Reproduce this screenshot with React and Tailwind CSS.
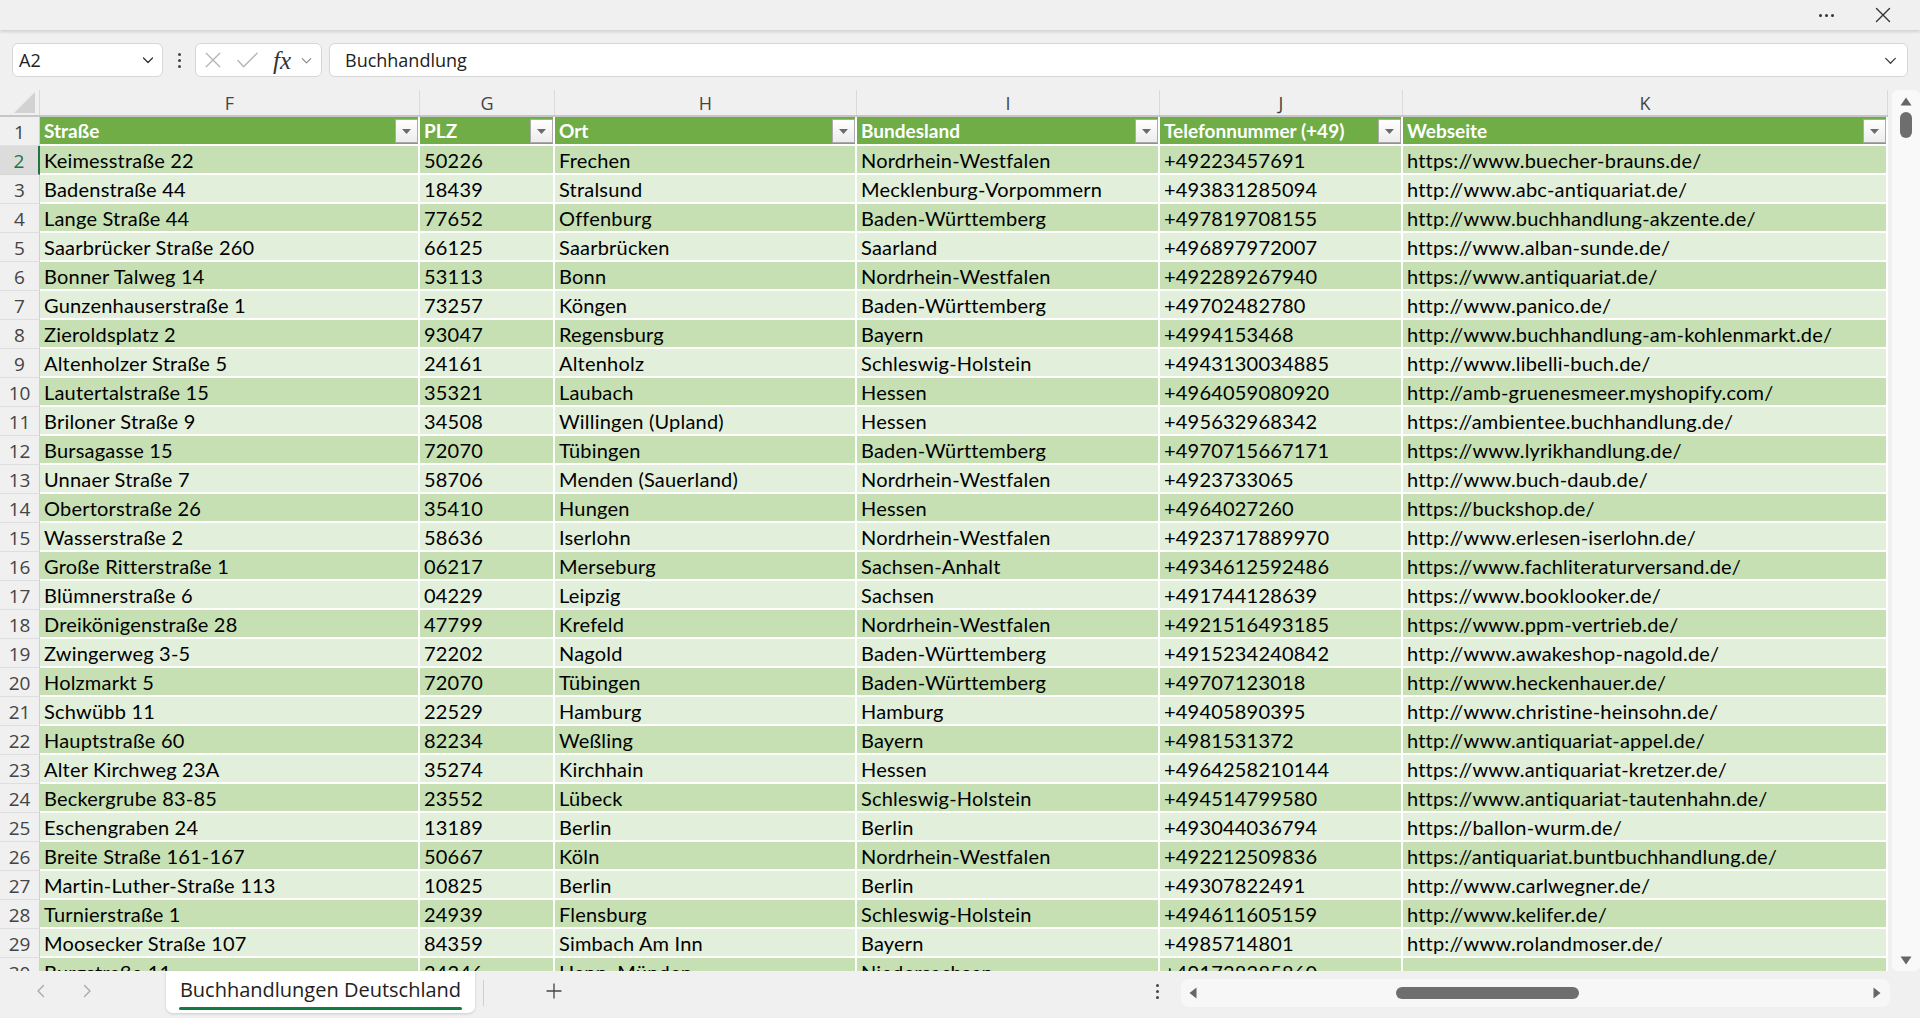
import React from "react";

const UI = { fontFamily: '"Open Sans", "Noto Sans", sans-serif' };
const CELL = { fontFamily: 'Lato, "Liberation Sans", sans-serif' };

const headers = ["Straße", "PLZ", "Ort", "Bundesland", "Telefonnummer (+49)", "Webseite"];
const letters = ["F", "G", "H", "I", "J", "K"];
const widths = ["w-[380px]", "w-[135px]", "w-[302px]", "w-[303px]", "w-[243px]", "w-[485px]"];

const data = [
  ["Keimesstraße 22", "50226", "Frechen", "Nordrhein-Westfalen", "+49223457691", "https://www.buecher-brauns.de/"],
  ["Badenstraße 44", "18439", "Stralsund", "Mecklenburg-Vorpommern", "+493831285094", "http://www.abc-antiquariat.de/"],
  ["Lange Straße 44", "77652", "Offenburg", "Baden-Württemberg", "+497819708155", "http://www.buchhandlung-akzente.de/"],
  ["Saarbrücker Straße 260", "66125", "Saarbrücken", "Saarland", "+496897972007", "https://www.alban-sunde.de/"],
  ["Bonner Talweg 14", "53113", "Bonn", "Nordrhein-Westfalen", "+492289267940", "https://www.antiquariat.de/"],
  ["Gunzenhauserstraße 1", "73257", "Köngen", "Baden-Württemberg", "+49702482780", "http://www.panico.de/"],
  ["Zieroldsplatz 2", "93047", "Regensburg", "Bayern", "+4994153468", "http://www.buchhandlung-am-kohlenmarkt.de/"],
  ["Altenholzer Straße 5", "24161", "Altenholz", "Schleswig-Holstein", "+4943130034885", "http://www.libelli-buch.de/"],
  ["Lautertalstraße 15", "35321", "Laubach", "Hessen", "+4964059080920", "http://amb-gruenesmeer.myshopify.com/"],
  ["Briloner Straße 9", "34508", "Willingen (Upland)", "Hessen", "+495632968342", "https://ambientee.buchhandlung.de/"],
  ["Bursagasse 15", "72070", "Tübingen", "Baden-Württemberg", "+4970715667171", "https://www.lyrikhandlung.de/"],
  ["Unnaer Straße 7", "58706", "Menden (Sauerland)", "Nordrhein-Westfalen", "+4923733065", "http://www.buch-daub.de/"],
  ["Obertorstraße 26", "35410", "Hungen", "Hessen", "+4964027260", "https://buckshop.de/"],
  ["Wasserstraße 2", "58636", "Iserlohn", "Nordrhein-Westfalen", "+4923717889970", "http://www.erlesen-iserlohn.de/"],
  ["Große Ritterstraße 1", "06217", "Merseburg", "Sachsen-Anhalt", "+4934612592486", "https://www.fachliteraturversand.de/"],
  ["Blümnerstraße 6", "04229", "Leipzig", "Sachsen", "+491744128639", "https://www.booklooker.de/"],
  ["Dreikönigenstraße 28", "47799", "Krefeld", "Nordrhein-Westfalen", "+4921516493185", "https://www.ppm-vertrieb.de/"],
  ["Zwingerweg 3-5", "72202", "Nagold", "Baden-Württemberg", "+4915234240842", "http://www.awakeshop-nagold.de/"],
  ["Holzmarkt 5", "72070", "Tübingen", "Baden-Württemberg", "+49707123018", "http://www.heckenhauer.de/"],
  ["Schwübb 11", "22529", "Hamburg", "Hamburg", "+49405890395", "http://www.christine-heinsohn.de/"],
  ["Hauptstraße 60", "82234", "Weßling", "Bayern", "+4981531372", "http://www.antiquariat-appel.de/"],
  ["Alter Kirchweg 23A", "35274", "Kirchhain", "Hessen", "+4964258210144", "https://www.antiquariat-kretzer.de/"],
  ["Beckergrube 83-85", "23552", "Lübeck", "Schleswig-Holstein", "+494514799580", "https://www.antiquariat-tautenhahn.de/"],
  ["Eschengraben 24", "13189", "Berlin", "Berlin", "+493044036794", "https://ballon-wurm.de/"],
  ["Breite Straße 161-167", "50667", "Köln", "Nordrhein-Westfalen", "+492212509836", "https://antiquariat.buntbuchhandlung.de/"],
  ["Martin-Luther-Straße 113", "10825", "Berlin", "Berlin", "+49307822491", "http://www.carlwegner.de/"],
  ["Turnierstraße 1", "24939", "Flensburg", "Schleswig-Holstein", "+494611605159", "http://www.kelifer.de/"],
  ["Moosecker Straße 107", "84359", "Simbach Am Inn", "Bayern", "+4985714801", "http://www.rolandmoser.de/"],
  ["Burgstraße 11", "34346", "Hann. Münden", "Niedersachsen", "+491738285860", ""],
];

function Chevron({ className = "", size = 16, color = "#333" }) {
  return (
    <svg width={size} height={size} viewBox="0 0 16 16" className={className}>
      <path d="M3.5 6l4.5 4.5L12.5 6" fill="none" stroke={color} strokeWidth="1.3" strokeLinecap="round" strokeLinejoin="round" />
    </svg>
  );
}

function FilterBtn() {
  return (
    <div className="w-[23px] h-[24px] shrink-0 border border-[#ababab] bg-gradient-to-b from-white to-[#ececec] flex items-center justify-center">
      <svg width="9" height="5" viewBox="0 0 9 5">
        <path d="M0 0h9L4.5 5z" fill="#6b6b6b" />
      </svg>
    </div>
  );
}

export default function App() {
  return (
    <div className="w-[1920px] h-[1018px] bg-[#f0f0f0] flex flex-col overflow-hidden" style={UI}>
      {/* Title bar */}
      <div className="h-[30px] shrink-0 flex items-center justify-end bg-[#f0f0f0] relative z-10 shadow-[0_2px_3px_rgba(0,0,0,0.13)]">
        <div className="flex items-center gap-[3px] mr-[41px]">
          <span className="w-[3px] h-[3px] rounded-full bg-[#333]" />
          <span className="w-[3px] h-[3px] rounded-full bg-[#333]" />
          <span className="w-[3px] h-[3px] rounded-full bg-[#333]" />
        </div>
        <svg width="16" height="16" viewBox="0 0 16 16" className="mr-[29px]">
          <path d="M1.5 1.5l13 13M14.5 1.5l-13 13" stroke="#333" strokeWidth="1.4" strokeLinecap="round" />
        </svg>
      </div>

      {/* Formula bar */}
      <div className="h-[60px] shrink-0 flex items-center pl-[12px] pr-[12px]">
        <div className="w-[151px] h-[34px] bg-white border border-[#d6d6d6] rounded-[6px] flex items-center justify-between pl-[6px] pr-[6px]">
          <span className="text-[18px] text-[#222]">A2</span>
          <Chevron size={16} color="#333" />
        </div>
        <div className="w-[32px] flex flex-col items-center gap-[3px]">
          <span className="w-[3px] h-[3px] rounded-full bg-[#444]" />
          <span className="w-[3px] h-[3px] rounded-full bg-[#444]" />
          <span className="w-[3px] h-[3px] rounded-full bg-[#444]" />
        </div>
        <div className="w-[127px] h-[34px] bg-white border border-[#d6d6d6] rounded-[6px] flex items-center pl-[8px]">
          <svg width="18" height="18" viewBox="0 0 16 16">
            <path d="M2 2l12 12M14 2L2 14" stroke="#b4b4b4" strokeWidth="1.2" strokeLinecap="round" />
          </svg>
          <svg width="23" height="18" viewBox="0 0 20 16" className="ml-[14px]">
            <path d="M1.5 8.5l5 5.5L18.5 2" fill="none" stroke="#b4b4b4" strokeWidth="1.2" strokeLinecap="round" strokeLinejoin="round" />
          </svg>
          <span className="ml-[14px] text-[25px] italic text-[#333] leading-none" style={{ fontFamily: '"Liberation Serif", serif' }}>
            fx
          </span>
          <Chevron size={15} color="#8a8a8a" className="ml-[8px]" />
        </div>
        <div className="ml-[7px] flex-1 h-[34px] bg-white border border-[#d6d6d6] rounded-[6px] flex items-center justify-between pl-[15px] pr-[8px]">
          <span className="text-[18px] text-[#222]">Buchhandlung</span>
          <Chevron size={17} color="#444" />
        </div>
      </div>

      {/* Grid area */}
      <div className="flex-1 flex min-h-0">
        <div className="w-[1888px] overflow-hidden flex flex-col">
          {/* column letters */}
          <div className="h-[27px] shrink-0 flex border-b-2 border-[#c6c6c6] bg-[#f0f0f0]">
            <div className="w-[40px] shrink-0 flex items-end justify-end pr-[4px] pb-[2px] border-r border-[#dadada]">
              <svg width="21" height="21" viewBox="0 0 21 21">
                <path d="M21 0V21H0z" fill="#d2d2d2" />
              </svg>
            </div>
            {letters.map((l, i) => (
              <div key={l} className={`${widths[i]} shrink-0 flex items-center justify-center pt-[1px] border-r border-[#dadada] text-[18px] text-[#444]`}>
                {l}
              </div>
            ))}
          </div>
          {/* header row */}
          <div className="h-[29px] shrink-0 flex">
            <div className="w-[40px] shrink-0 border-r border-[#d0d0d0] border-b border-b-[#e0e0e0] flex items-center justify-center pt-[2px] text-[19px] text-[#444]">
              1
            </div>
            {headers.map((h, i) => (
              <div
                key={h}
                className={`${widths[i]} shrink-0 flex items-start justify-between bg-[#70ad47] border-r-2 border-b-2 border-white`}
              >
                <span className="pl-[4px] pt-[1px] text-[19px] leading-[26px] font-bold text-white" style={CELL}>
                  {h}
                </span>
                <div className="pt-[2px]">
                  <FilterBtn />
                </div>
              </div>
            ))}
          </div>
          {data.map((row, r) => {
            const n = r + 2;
            const bg = r % 2 === 0 ? "bg-[#c6e0b4]" : "bg-[#e2efda]";
            const sel = n === 2;
            return (
              <div key={n} className="h-[29px] shrink-0 flex">
                <div
                  className={
                    sel
                      ? "w-[40px] shrink-0 bg-[#dcdcdc] border-r-2 border-[#217346] border-b border-b-[#d6d6d6] flex items-center justify-center pt-[2px] text-[19px] text-[#217346]"
                      : "w-[40px] shrink-0 border-r border-[#d0d0d0] border-b border-b-[#dedede] flex items-center justify-center pt-[2px] text-[19px] text-[#444]"
                  }
                >
                  {n}
                </div>
                {row.map((c, i) => (
                  <div
                    key={i}
                    className={`${widths[i]} shrink-0 ${bg} border-r-2 border-b-2 border-white pl-[4px] pt-[2px] text-[20px] leading-[25px] tracking-[0.2px] text-black whitespace-nowrap overflow-hidden`}
                    style={CELL}
                  >
                    {c}
                  </div>
                ))}
              </div>
            );
          })}
        </div>
        {/* vertical scrollbar */}
        <div className="w-[32px] shrink-0 pl-[4px]">
          <div className="h-full bg-[#f9f9f9] rounded-[6px] flex flex-col items-center pt-[7px] pb-[6px]">
            <svg width="12" height="9" viewBox="0 0 12 9">
              <path d="M6 0.5L11.5 8.5H0.5z" fill="#666" />
            </svg>
            <div className="mt-[6px] w-[12px] h-[26px] rounded-full bg-[#6e6e6e]" />
            <div className="flex-1" />
            <svg width="12" height="9" viewBox="0 0 12 9">
              <path d="M6 8.5L11.5 0.5H0.5z" fill="#666" />
            </svg>
          </div>
        </div>
      </div>

      {/* Bottom bar */}
      <div className="h-[47px] shrink-0 flex items-start bg-[#f0f0f0]">
        <div className="flex items-center h-[40px] pl-[33px]">
          <svg width="16" height="16" viewBox="0 0 16 16">
            <path d="M10.5 2.5L5 8l5.5 5.5" fill="none" stroke="#a6a6a6" strokeWidth="1.3" strokeLinecap="round" strokeLinejoin="round" />
          </svg>
          <svg width="16" height="16" viewBox="0 0 16 16" className="ml-[30px]">
            <path d="M5.5 2.5L11 8l-5.5 5.5" fill="none" stroke="#a6a6a6" strokeWidth="1.3" strokeLinecap="round" strokeLinejoin="round" />
          </svg>
        </div>
        <div className="ml-[71px] w-[309px] h-[42px] bg-white rounded-b-[7px] shadow-[0_1px_3px_rgba(0,0,0,0.15)] flex flex-col items-center justify-center pt-[2px]">
          <span className="text-[20px] text-[#222] leading-[26px]">Buchhandlungen Deutschland</span>
          <div className="mt-[4px] w-[283px] h-[3px] bg-[#107c41] rounded-full" />
        </div>
        <div className="ml-[8px] mt-[9px] w-[1px] h-[26px] bg-[#cfcfcf]" />
        <div className="ml-[61px] h-[40px] flex items-center">
          <svg width="18" height="18" viewBox="0 0 18 18">
            <path d="M9 2v14M2 9h14" stroke="#444" strokeWidth="1.3" strokeLinecap="round" />
          </svg>
        </div>
        <div className="flex-1" />
        <div className="h-[40px] flex flex-col items-center justify-center gap-[3px] mr-[22px]">
          <span className="w-[3px] h-[3px] rounded-full bg-[#444]" />
          <span className="w-[3px] h-[3px] rounded-full bg-[#444]" />
          <span className="w-[3px] h-[3px] rounded-full bg-[#444]" />
        </div>
        <div className="mt-[8px] w-[709px] h-[28px] bg-[#f7f7f7] rounded-[8px] flex items-center pl-[8px] pr-[9px] mr-[30px]">
          <svg width="8" height="12" viewBox="0 0 8 12">
            <path d="M0.5 6L7.5 0.5V11.5z" fill="#666" />
          </svg>
          <div className="ml-[199px] w-[183px] h-[12px] rounded-full bg-[#6e6e6e]" />
          <div className="flex-1" />
          <svg width="8" height="12" viewBox="0 0 8 12">
            <path d="M7.5 6L0.5 0.5V11.5z" fill="#666" />
          </svg>
        </div>
      </div>
    </div>
  );
}
